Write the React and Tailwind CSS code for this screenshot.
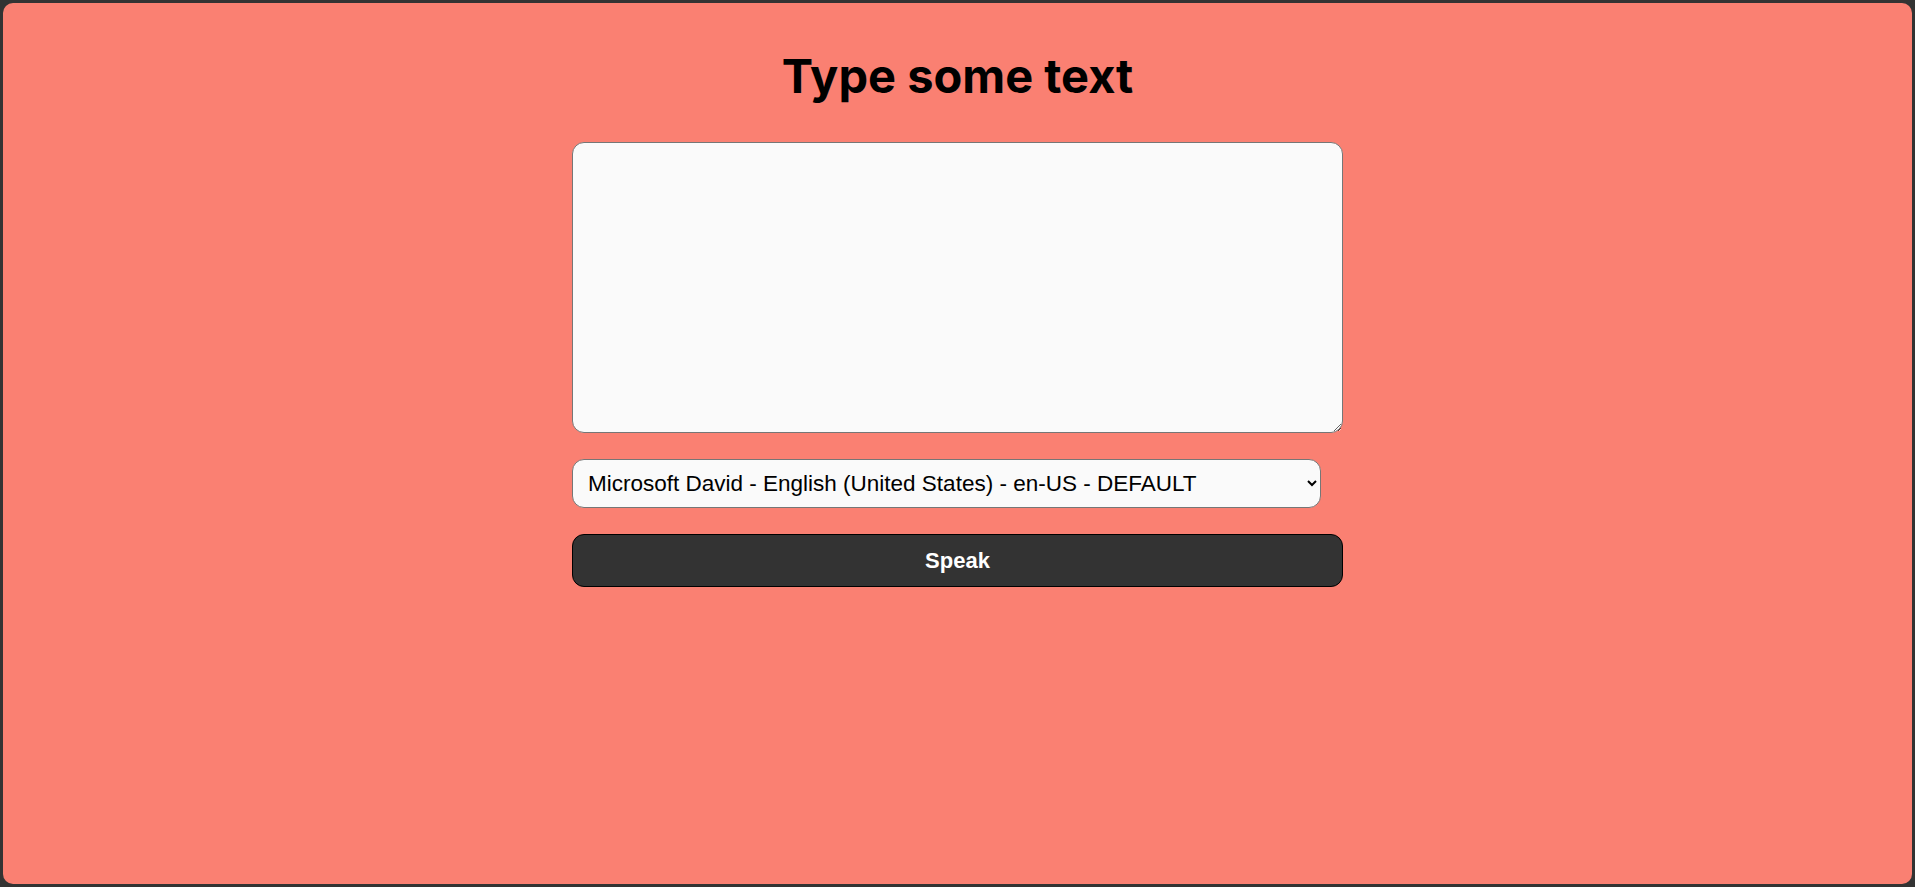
import React from "react";

export default function App() {
  return (
    <div className="h-[887px] w-full overflow-hidden bg-[#333333] p-[3px]">
      <div className="flex h-full w-full flex-col items-center rounded-[10px] bg-[#fa8072]">
        <h1 className="mt-[45px] font-['Inter',_'Noto_Sans',_sans-serif] text-[47px] font-bold leading-[56px] text-black">
          Type some text
        </h1>
        <div className="mt-[38px] flex w-[771px] flex-col items-start font-['Liberation_Sans',_Arial,_sans-serif]">
          <textarea className="block h-[291px] w-full rounded-[12px] border border-[#767676] bg-[#fafafa] p-3" />
          <select
            className="mt-[26px] h-[49px] w-[749px] rounded-[12px] border border-[#767676] bg-[#fafafa] pl-[11px] pr-[6px] text-[22.5px] text-black"
            defaultValue="david"
          >
            <option value="david">Microsoft David - English (United States) - en-US - DEFAULT</option>
          </select>
          <button className="mt-[26px] h-[53px] w-full rounded-[12px] border border-black bg-[#333333] text-[22px] font-bold text-white">
            Speak
          </button>
        </div>
      </div>
    </div>
  );
}
